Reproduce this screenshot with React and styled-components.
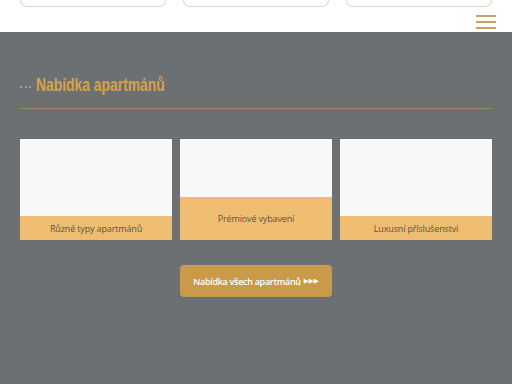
import React from "react";
import styled, { createGlobalStyle } from "styled-components";

const Global = createGlobalStyle`
  html, body { margin: 0; padding: 0; background: #6d7073; }
  body { font-family: "Open Sans", "Liberation Sans", sans-serif; width: 512px; height: 384px; overflow: hidden; }
`;

const Header = styled.header`
  background: #ffffff;
  height: 32px;
  display: flex;
  flex-direction: column;
`;

const TabRow = styled.div`
  display: flex;
  gap: 17px;
  padding: 0 20px;
`;

const Tab = styled.div`
  width: 146px;
  height: 7px;
  box-sizing: border-box;
  border: 1px solid #ddd6c6;
  border-top: none;
  border-radius: 0 0 9px 9px;
  background: #fff;
`;

const BurgerRow = styled.div`
  display: flex;
  justify-content: flex-end;
  padding: 8px 16px 0 0;
`;

const Burger = styled.div`
  width: 20px;
  display: flex;
  flex-direction: column;
  gap: 4.5px;
  span {
    display: block;
    height: 1.5px;
    background: #c9a263;
  }
`;

const Section = styled.section`
  background: #6d7073;
  padding: 42px 20px 0;
  height: 352px;
  box-sizing: border-box;
`;

const TitleRow = styled.div`
  display: flex;
  align-items: center;
  gap: 5px;
  height: 22px;
`;

const Dots = styled.span`
  display: flex;
  gap: 2.5px;
  margin-top: 3px;
  i {
    display: block;
    width: 2px;
    height: 2px;
    background: #c9a263;
    opacity: 0.85;
  }
`;

const Title = styled.h2`
  margin: 0;
  font-family: "Liberation Sans", "Arial", sans-serif;
  font-weight: 700;
  font-size: 18.5px;
  line-height: 22px;
  color: #d6a447;
  transform: scaleX(0.75);
  transform-origin: left center;
  white-space: nowrap;
`;

const Rule = styled.hr`
  margin: 12px 0 0;
  border: none;
  height: 1px;
  background: #9e8769;
`;

const Cards = styled.div`
  display: grid;
  grid-template-columns: repeat(3, 152px);
  gap: 8px;
  margin-top: 30px;
`;

const Card = styled.div`
  height: 101px;
  background: #f8f8f8;
  display: flex;
  flex-direction: column;
  justify-content: flex-end;
`;

const Label = styled.div`
  height: ${(p) => (p.$open ? 43 : 24)}px;
  background: #eebd71;
  color: #62533f;
  font-size: 9px;
  letter-spacing: -0.15px;
  display: flex;
  align-items: center;
  justify-content: center;
  box-sizing: border-box;
`;

const ButtonRow = styled.div`
  display: flex;
  justify-content: center;
  margin-top: 25px;
`;

const Button = styled.a`
  width: 152px;
  height: 32px;
  border-radius: 4px;
  background: #c99a49;
  color: #ffffff;
  font-size: 9px;
  font-weight: 600;
  letter-spacing: -0.3px;
  display: flex;
  align-items: center;
  justify-content: center;
  gap: 3px;
  text-decoration: none;
`;

const Arrows = styled.span`
  font-family: "DejaVu Sans", sans-serif;
  font-size: 6.5px;
  letter-spacing: 0px;
`;

export default function App() {
  return (
    <>
      <Global />
      <Header>
        <TabRow>
          <Tab />
          <Tab />
          <Tab />
        </TabRow>
        <BurgerRow>
          <Burger>
            <span />
            <span />
            <span />
          </Burger>
        </BurgerRow>
      </Header>
      <Section>
        <TitleRow>
          <Dots>
            <i />
            <i />
            <i />
          </Dots>
          <Title>Nabídka apartmánů</Title>
        </TitleRow>
        <Rule />
        <Cards>
          <Card>
            <Label>Různé typy apartmánů</Label>
          </Card>
          <Card>
            <Label $open>Prémiové vybavení</Label>
          </Card>
          <Card>
            <Label>Luxusní příslušenství</Label>
          </Card>
        </Cards>
        <ButtonRow>
          <Button href="#">
            Nabídka všech apartmánů <Arrows>▶▶▶</Arrows>
          </Button>
        </ButtonRow>
      </Section>
    </>
  );
}
